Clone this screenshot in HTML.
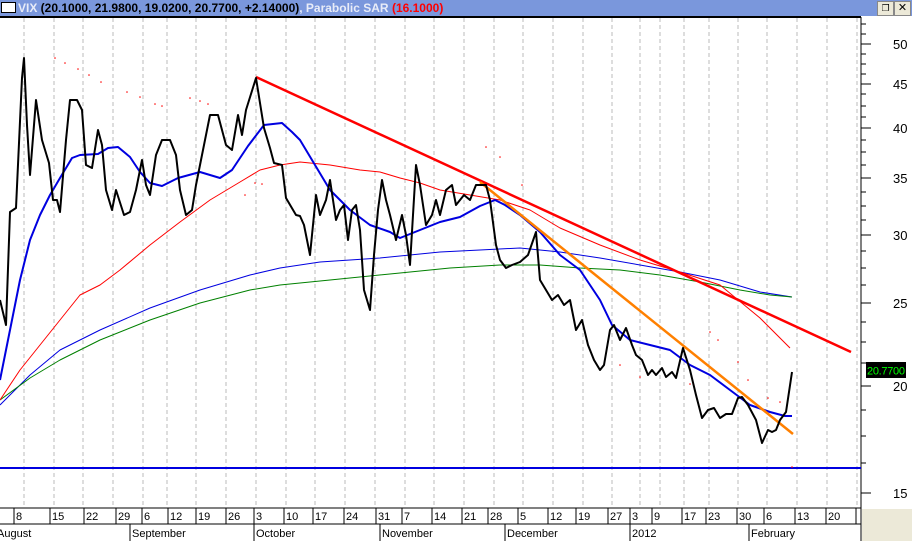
<!DOCTYPE html>
<html><head><style>
body{margin:0;width:912px;height:541px;overflow:hidden;background:#fff;font-family:"Liberation Sans",sans-serif;position:relative}
.t{position:absolute;left:0;top:0;width:912px;height:16px;background:#7a97dc;font-weight:bold;font-size:12px;line-height:16px;white-space:nowrap}
</style></head><body>
<div class="t"><span style="display:inline-block;width:13px;height:9px;border:1px solid #000;background:#fff;margin:0 2px 0 1px;vertical-align:-1px"></span><span style="color:#e8ecf8">VIX</span> (20.1000, 21.9800, 19.0200, 20.7700, +2.14000)<span style="color:#e8ecf8">, Parabolic SAR</span> <span style="color:#f00">(16.1000)</span></div>
<div style="position:absolute;left:877px;top:1px;width:15px;height:13px;background:#ece9d8;border:1px solid #888;font-size:9px;text-align:center;line-height:13px">&#x2750;</div>
<div style="position:absolute;left:894px;top:1px;width:15px;height:13px;background:#ece9d8;border:1px solid #888;font-size:11px;text-align:center;line-height:13px">✕</div>
<svg width="912" height="541" style="position:absolute;left:0;top:0" xmlns="http://www.w3.org/2000/svg" font-family="Liberation Sans" font-size="12">
<line x1="0" y1="17" x2="861" y2="17" stroke="#000" stroke-width="2"/>
<g stroke="#bbb" stroke-dasharray="4,3">
<path d="M24 18V508M54 18V508M83 18V508M113 18V508M143 18V508M167 18V508M196 18V508M226 18V508M256 18V508M286 18V508M315 18V508M345 18V508M375 18V508M405 18V508M434 18V508M464 18V508M494 18V508M523 18V508M553 18V508M583 18V508M612 18V508M640 18V508M660 18V508M684 18V508M709 18V508M738 18V508M767 18V508M797 18V508M827 18V508M857 18V508"/>
</g>
<line x1="861" y1="17" x2="861" y2="508" stroke="#000"/>
<g stroke="#000"><path d="M861 44h10M861 84h10M861 128h10M861 178h10M861 235h10M861 303h10M861 386h10M861 493h10"/>
<path d="M861 24h5M861 34h5M861 54h5M861 64h5M861 74h5M861 94h5M861 106h5M861 117h5M861 140h5M861 152h5M861 165h5M861 192h5M861 206h5M861 220h5M861 251h5M861 268h5M861 285h5M861 322h5M861 342h5M861 363h5M861 410h5M861 436h5M861 463h5"/></g>
<g font-size="13"><text x="893" y="49">50</text><text x="893" y="89">45</text><text x="893" y="133">40</text><text x="893" y="183">35</text><text x="893" y="240">30</text><text x="893" y="308">25</text><text x="893" y="391">20</text><text x="893" y="498">15</text></g>
<rect x="866" y="362" width="40" height="16" fill="#000"/><text x="867" y="374.5" fill="#0f0" font-size="11" textLength="38">20.7700</text>
<line x1="0" y1="468" x2="861" y2="468" stroke="#0000e0" stroke-width="2"/>
<g fill="#f00"><circle cx="55" cy="58" r=".8"/><circle cx="65" cy="63" r=".8"/><circle cx="78" cy="69" r=".8"/><circle cx="89" cy="75" r=".8"/><circle cx="101" cy="82" r=".8"/><circle cx="127" cy="92" r=".8"/><circle cx="140" cy="97" r=".8"/><circle cx="155" cy="104" r=".8"/><circle cx="162" cy="106" r=".8"/><circle cx="190" cy="98" r=".8"/><circle cx="200" cy="101" r=".8"/><circle cx="208" cy="104" r=".8"/><circle cx="245" cy="195" r=".8"/><circle cx="255" cy="183" r=".8"/><circle cx="262" cy="184" r=".8"/><circle cx="486" cy="147" r=".8"/><circle cx="500" cy="157" r=".8"/><circle cx="522" cy="185" r=".8"/><circle cx="620" cy="365" r=".8"/><circle cx="640" cy="377" r=".8"/><circle cx="710" cy="332" r=".8"/><circle cx="718" cy="340" r=".8"/><circle cx="738" cy="362" r=".8"/><circle cx="748" cy="380" r=".8"/><circle cx="768" cy="398" r=".8"/><circle cx="780" cy="402" r=".8"/><circle cx="690" cy="384" r=".8"/><circle cx="792" cy="467" r=".8"/></g>
<g fill="none" stroke-linejoin="round">
<polyline stroke="#0000e0" stroke-width="1" points="0,405 30,375 60,350 100,330 150,308 200,290 250,275 280,268 320,262 380,258 440,252 480,250 520,248 560,252 600,258 640,265 680,272 720,280 760,292 792,297"/>
<polyline stroke="#008000" stroke-width="1" points="0,400 30,378 60,360 100,340 150,320 200,303 250,290 280,285 330,280 400,273 450,268 500,265 540,265 580,268 620,270 660,275 700,282 740,290 770,295 792,297"/>
<polyline stroke="#f00" stroke-width="1" points="0,400 20,370 40,345 60,320 80,295 100,285 120,270 150,245 180,222 210,200 240,182 260,170 280,165 300,162 330,165 360,170 380,172 400,178 420,183 440,190 470,195 500,200 530,210 560,228 600,245 640,260 680,272 720,285 760,318 790,348"/>
<polyline stroke="#0000e0" stroke-width="2" points="0,380 10,330 20,280 30,240 40,215 50,195 60,178 72,158 80,155 98,154 108,148 118,147 130,157 140,172 150,183 162,186 178,178 200,172 220,178 232,170 248,146 264,125 282,123 292,132 300,140 315,165 330,190 350,210 370,225 390,232 400,238 420,230 440,222 460,217 480,206 495,200 505,205 520,215 540,232 560,255 580,270 600,300 612,325 630,340 650,345 670,350 690,365 710,375 730,390 750,405 770,412 785,416 792,416"/>
<polyline stroke="#f00" stroke-width="2.5" points="256,77 851,352"/>
<polyline stroke="#ff8000" stroke-width="2.5" points="480,182 793,434"/>
<polyline stroke="#000" stroke-width="2" points="0,300 6,325 10,212 16,208 22,78 24,58 27,125 30,175 36,100 42,140 49,163 53,200 57,200 60,212 66,140 70,100 77,100 82,110 86,165 92,168 98,130 102,145 106,190 112,210 116,190 124,215 130,212 136,190 142,160 146,185 150,195 156,155 162,140 170,140 176,155 180,190 186,215 192,210 196,185 200,165 210,115 218,115 226,145 232,150 238,115 242,135 246,110 256,78 264,128 270,148 274,163 282,165 286,198 296,215 300,216 304,225 310,255 316,195 320,215 326,200 330,180 336,220 340,210 344,205 348,240 352,210 356,205 360,230 364,290 370,310 374,255 378,210 382,180 386,200 390,215 396,240 402,215 406,235 410,265 416,165 420,185 426,225 432,215 436,200 440,215 446,190 452,185 456,205 460,200 464,195 470,200 476,185 480,185 486,185 490,200 496,245 500,260 506,268 512,265 520,262 528,255 536,232 540,280 546,290 552,300 558,295 564,305 570,300 576,330 582,320 588,345 594,360 600,370 604,365 610,330 614,325 620,340 626,328 632,345 636,355 642,360 648,375 652,370 656,375 662,368 666,377 672,372 676,378 683,348 690,370 696,395 702,418 708,410 714,408 720,418 726,414 732,414 738,398 742,397 748,405 756,420 762,443 768,430 772,432 776,430 780,420 786,412 792,372"/>
</g>
<rect x="0" y="508" width="861" height="33" fill="#fff"/>
<line x1="0" y1="508" x2="861" y2="508" stroke="#000"/>
<line x1="0" y1="524" x2="861" y2="524" stroke="#000"/>
<line x1="861" y1="508" x2="861" y2="541" stroke="#000"/>
<rect x="862" y="509" width="50" height="32" fill="#ece9d8"/>
<g stroke="#000"><path d="M14 508v16M50 508v16M84 508v16M116 508v16M142 508v16M168 508v16M196 508v16M226 508v16M254 508v16M284 508v16M313 508v16M344 508v16M376 508v16M402 508v16M432 508v16M462 508v16M488 508v16M518 508v16M548 508v16M576 508v16M608 508v16M630 508v16M652 508v16M682 508v16M706 508v16M737 508v16M764 508v16M795 508v16M826 508v16M856 508v16"/>
<path d="M130 524v17M254 524v17M380 524v17M505 524v17M630 524v17M749 524v17"/></g>
<g font-size="11"><text x="16" y="520">8</text><text x="52" y="520">15</text><text x="86" y="520">22</text><text x="118" y="520">29</text><text x="144" y="520">6</text><text x="170" y="520">12</text><text x="198" y="520">19</text><text x="228" y="520">26</text><text x="256" y="520">3</text><text x="286" y="520">10</text><text x="315" y="520">17</text><text x="346" y="520">24</text><text x="378" y="520">31</text><text x="404" y="520">7</text><text x="434" y="520">14</text><text x="464" y="520">21</text><text x="490" y="520">28</text><text x="520" y="520">5</text><text x="550" y="520">12</text><text x="578" y="520">19</text><text x="610" y="520">27</text><text x="632" y="520">3</text><text x="654" y="520">9</text><text x="684" y="520">17</text><text x="708" y="520">23</text><text x="739" y="520">30</text><text x="766" y="520">6</text><text x="797" y="520">13</text><text x="828" y="520">20</text>
<text x="-3" y="537">August</text><text x="132" y="537">September</text><text x="256" y="537">October</text><text x="382" y="537">November</text><text x="507" y="537">December</text><text x="632" y="537">2012</text><text x="751" y="537">February</text></g>
</svg>
</body></html>
